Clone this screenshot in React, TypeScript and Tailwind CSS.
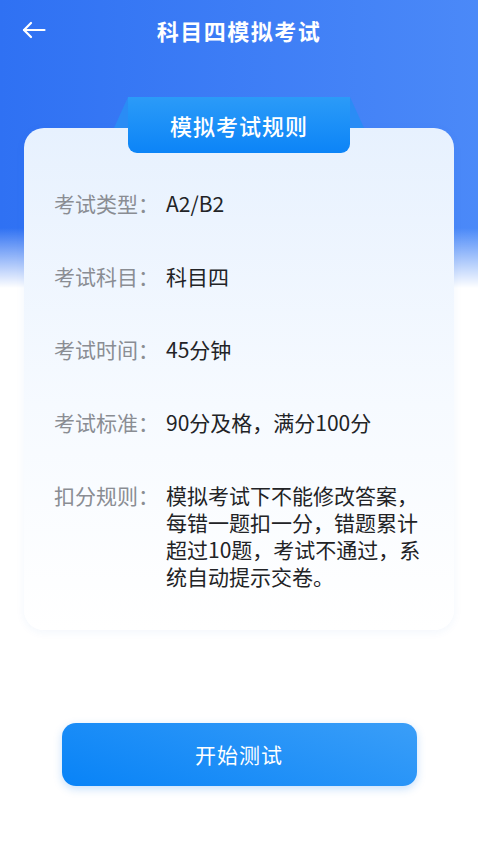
const rows: { label: string; value: string[] }[] = [
  { label: "考试类型：", value: ["A2/B2"] },
  { label: "考试科目：", value: ["科目四"] },
  { label: "考试时间：", value: ["45分钟"] },
  { label: "考试标准：", value: ["90分及格，满分100分"] },
  {
    label: "扣分规则：",
    value: ["模拟考试下不能修改答案，", "每错一题扣一分，错题累计", "超过10题，考试不通过，系", "统自动提示交卷。"],
  },
];

function BackArrow() {
  return (
    <svg width="24" height="18" viewBox="0 0 24 18" fill="none" stroke="white" strokeWidth="2.2" strokeLinecap="round" strokeLinejoin="round">
      <path d="M22.5 9H2" />
      <path d="M9 2L2 9l7 7" />
    </svg>
  );
}

function TitleTab() {
  return (
    <div className="absolute left-1/2 top-[-31px] -translate-x-1/2 w-[250px] h-[56px]">
      <svg className="absolute left-0 top-0" width="250" height="31" viewBox="0 0 250 31">
        <polygon points="0,31 14,0 236,0 250,31" fill="#2a8cf5" />
      </svg>
      <div className="absolute left-[14px] top-0 w-[222px] h-[56px] rounded-b-[9px] bg-[linear-gradient(to_bottom,#2b9bf8,#0c84f7)] flex items-center justify-center">
        <span className="text-[22px] font-medium text-white tracking-[1px]">模拟考试规则</span>
      </div>
    </div>
  );
}

export default function App() {
  return (
    <div
      className="min-h-[850px] w-full bg-[linear-gradient(to_bottom,rgba(255,255,255,0)_228px,#ffffff_288px),linear-gradient(to_right,#2f71f3,#4b89f8)] pb-10"
      style={{ fontFamily: '"Noto Sans CJK SC", "Noto Sans", sans-serif' }}
    >
      <div className="relative h-[60px] flex items-center justify-center">
        <div className="absolute left-[22px] top-[21px]">
          <BackArrow />
        </div>
        <h1 className="text-[22px] font-bold text-white tracking-[1.5px]">科目四模拟考试</h1>
      </div>

      <div className="relative mx-[24px] mt-[68px] rounded-[20px] bg-[linear-gradient(to_bottom,#e7f1fe,#f6faff_55%,#ffffff)] shadow-[0_2px_10px_rgba(40,100,200,0.06)] pt-[62px] pb-[40px] pl-[30px] pr-[20px]">
        <TitleTab />
        <div className="flex flex-col gap-[46px]">
          {rows.map((r) => (
            <div key={r.label} className="flex text-[21px] leading-[27px]">
              <div className="w-[112px] shrink-0 text-[#8a8d93]">{r.label}</div>
              <div className="text-[#222326]">
                {r.value.map((line) => (
                  <div key={line}>{line}</div>
                ))}
              </div>
            </div>
          ))}
        </div>
      </div>

      <button className="mt-[93px] mx-auto flex items-center justify-center w-[355px] h-[63px] rounded-[14px] bg-[linear-gradient(20deg,#0883f7,#3a9ef8)] shadow-[0_3px_8px_rgba(30,130,240,0.25)]">
        <span className="text-[21px] text-white tracking-[1px]">开始测试</span>
      </button>
    </div>
  );
}
